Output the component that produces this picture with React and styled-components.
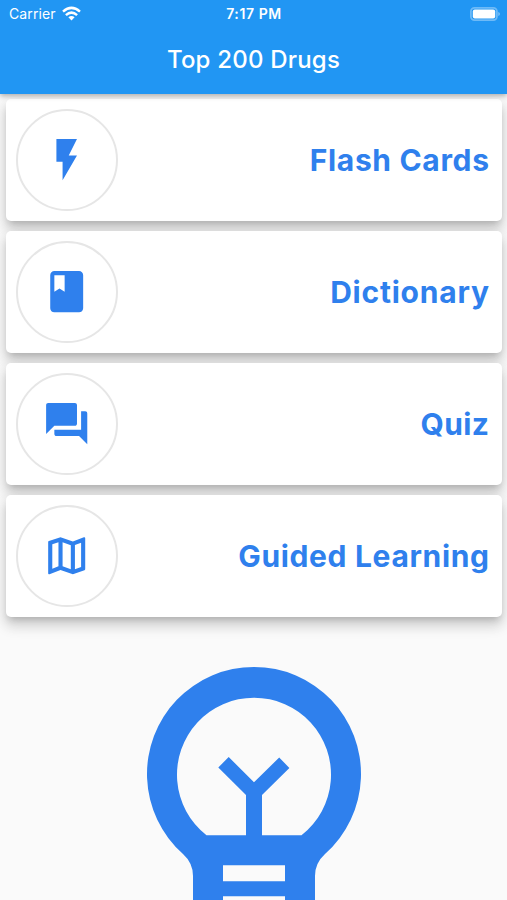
import React from "react";
import styled, { createGlobalStyle } from "styled-components";

const GlobalStyle = createGlobalStyle`
  * { box-sizing: border-box; }
  body {
    margin: 0;
    background: #fafafa;
    font-family: Inter, "Liberation Sans", sans-serif;
  }
`;

const Screen = styled.div`
  display: flex;
  flex-direction: column;
  width: 507px;
  height: 900px;
  overflow: hidden;
  background: #fafafa;
`;

const Header = styled.header`
  position: relative;
  z-index: 1;
  flex: none;
  height: 94px;
  background: #2196f3;
  color: #fff;
  box-shadow: 0 2px 5px rgba(0, 0, 0, 0.3);
`;

const StatusBar = styled.div`
  display: grid;
  grid-template-columns: 1fr auto 1fr;
  align-items: center;
  height: 27px;
  padding: 0 6px 0 9px;
`;

const Carrier = styled.div`
  display: flex;
  align-items: center;
  gap: 6px;
  font-size: 14px;
  letter-spacing: 0.1px;
`;

const Clock = styled.div`
  margin-right: 2px;
  font-size: 14px;
  font-weight: 600;
  letter-spacing: 0.6px;
`;

const BatterySlot = styled.div`
  display: flex;
  justify-content: flex-end;
`;

const Title = styled.h1`
  margin: 0;
  height: 66px;
  line-height: 66px;
  text-align: center;
  font-size: 24px;
  font-weight: 500;
  letter-spacing: 0.2px;
`;

const Menu = styled.main`
  flex: none;
  display: flex;
  flex-direction: column;
  gap: 10px;
  padding: 4.5px 5px 0 6px;
`;

const Card = styled.section`
  display: flex;
  align-items: center;
  justify-content: space-between;
  height: 122px;
  padding: 0 13px 0 10px;
  border-radius: 5px;
  background: #fff;
  box-shadow: 0 5px 7px -3px rgba(0, 0, 0, 0.18), 0 9px 13px 1px rgba(0, 0, 0, 0.12),
    0 3px 16px 2px rgba(0, 0, 0, 0.07);
`;

const IconRing = styled.div`
  display: flex;
  align-items: center;
  justify-content: center;
  width: 102px;
  height: 102px;
  border: 2px solid #e6e6e6;
  border-radius: 50%;
  color: #2f80ed;
`;

const Label = styled.span`
  color: #2f80ed;
  font-size: 30px;
  font-weight: 700;
  letter-spacing: ${(p) => p.$tracking}px;
  margin-right: ${(p) => -p.$tracking}px;
`;

const Illustration = styled.div`
  flex: none;
  display: flex;
  justify-content: center;
  padding-top: 48.5px;
  color: #2f80ed;
`;

const items = [
  { label: "Flash Cards", tracking: 0.67, path: "M7 2v11h3v9l7-12h-4l4-8z" },
  {
    label: "Dictionary",
    tracking: 0.78,
    path: "M18 2H6c-1.1 0-2 .9-2 2v16c0 1.1.9 2 2 2h12c1.1 0 2-.9 2-2V4c0-1.1-.9-2-2-2zM6 4h5v8l-2.5-1.5L6 12V4z",
  },
  {
    label: "Quiz",
    tracking: 0.4,
    path: "M21 6h-2v9H6v2c0 .55.45 1 1 1h11l4 4V7c0-.55-.45-1-1-1zm-4 6V3c0-.55-.45-1-1-1H3c-.55 0-1 .45-1 1v14l4-4h10c.55 0 1-.45 1-1z",
  },
  {
    label: "Guided Learning",
    tracking: 0.66,
    path: "M20.5 3l-.16.03L15 5.1 9 3 3.36 4.9c-.21.07-.36.25-.36.48V20.5c0 .28.22.5.5.5l.16-.03L9 18.9l6 2.1 5.64-1.9c.21-.07.36-.25.36-.48V3.5c0-.28-.22-.5-.5-.5zM10 5.47l4 1.4v11.66l-4-1.4V5.47zm-5 .99l3-1.01v11.7l-3 1.16V6.46zm14 11.08l-3 1.01V6.86l3-1.16v11.84z",
  },
];

function WifiIcon() {
  return (
    <svg width="19" height="15" viewBox="0 0 19 15" fill="none" stroke="currentColor" strokeWidth="2.5">
      <path d="M1 5.6Q9.5-1.8 18 5.6" />
      <path d="M3.9 9.1Q9.5 4.1 15.1 9.1" />
      <path d="M9.5 14.4L6.4 11.3Q9.5 8.6 12.6 11.3Z" fill="currentColor" stroke="none" />
    </svg>
  );
}

function BatteryIcon() {
  return (
    <svg width="31" height="14" viewBox="0 0 31 14">
      <rect x="0.9" y="0.9" width="26" height="12.2" rx="3.6" fill="none" stroke="#fff" strokeOpacity="0.35" strokeWidth="1.8" />
      <rect x="2.8" y="2.4" width="22.4" height="9.2" rx="2" fill="#fff" />
      <path d="M28.3 5v4q1.6-.6 1.6-2t-1.6-2z" fill="#fff" fillOpacity="0.45" />
    </svg>
  );
}

function BulbIcon() {
  return (
    <svg width="216" height="236" viewBox="146 665 216 236" fill="currentColor">
      <path
        fillRule="evenodd"
        d="M183 854A107 107 0 1 1 325 854Q315 863 315 876V901H193V876Q193 863 183 854Z
           M206.5 835.3H246V795L218.3 767.5L228.7 757L254 782.3L279.2 757.5L289.4 768L262 795V835.3H301.5A77 77 0 1 0 206.5 835.3Z
           M223 865.3V881.3H285V865.3Z M223 896.3V901H285V896.3Z"
      />
    </svg>
  );
}

export default function App() {
  return (
    <Screen>
      <GlobalStyle />
      <Header>
        <StatusBar>
          <Carrier>
            Carrier
            <WifiIcon />
          </Carrier>
          <Clock>7:17 PM</Clock>
          <BatterySlot>
            <BatteryIcon />
          </BatterySlot>
        </StatusBar>
        <Title>Top 200 Drugs</Title>
      </Header>
      <Menu>
        {items.map((item) => (
          <Card key={item.label}>
            <IconRing>
              <svg width="49.4" height="49.4" viewBox="0 0 24 24" fill="currentColor">
                <path d={item.path} />
              </svg>
            </IconRing>
            <Label $tracking={item.tracking}>{item.label}</Label>
          </Card>
        ))}
      </Menu>
      <Illustration>
        <BulbIcon />
      </Illustration>
    </Screen>
  );
}
